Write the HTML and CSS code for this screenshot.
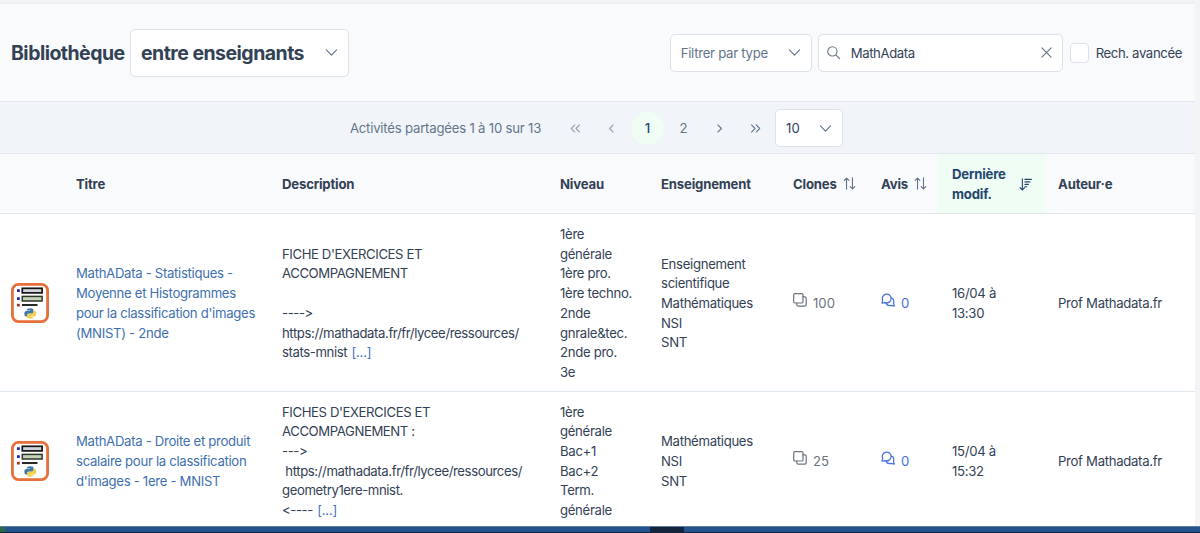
FILE: index.html
```
<!DOCTYPE html>
<html lang="fr">
<head>
    <meta charset="UTF-8">
    <meta name="viewport" content="width=device-width, initial-scale=1.0">
    <title>Bibliothèque entre enseignants</title>
    <link rel="stylesheet" href="styles.css">
</head>
<body>
    <!-- Shared icons -->
    <svg class="defs" width="0" height="0">
        <symbol id="chevron" viewBox="0 0 14 14"><path d="M1.5 4.2 7 9.8l5.5-5.6"/></symbol>
        <symbol id="sort" viewBox="0 0 14 14"><path d="M3.8 13V1.2M1.3 3.7l2.5-2.5 2.5 2.5M10.2 1v11.8M7.7 10.3l2.5 2.5 2.5-2.5"/></symbol>
        <symbol id="clone" viewBox="0 0 14 14"><rect x=".7" y=".7" width="9.3" height="9.3" rx="1.3"/><path d="M10 3.8h1.8a1.4 1.4 0 0 1 1.4 1.4v6.6a1.4 1.4 0 0 1-1.4 1.4H5.2a1.4 1.4 0 0 1-1.4-1.4V10"/></symbol>
        <symbol id="comments" viewBox="0 0 14 14"><path d="M1 10.2l.7-3A4.4 4.4 0 1 1 4.3 9.6zM10.3 4.8a4 4 0 0 1 2.2 5l.8 3.3-3.5-.7a4.2 4.2 0 0 1-5-2.6"/></symbol>
        <symbol id="activity" viewBox="0 0 38 40">
            <rect x="1.4" y="1.4" width="35.2" height="37.2" rx="6" fill="#fff" stroke="#e66f3a" stroke-width="2.8"/>
            <path fill="#2222c8" d="M6 6.2h2.8V9H6zM6 14.2h2.8V17H6z"/>
            <path fill="#a93222" d="M6 20.8h2.8v2.7H6z"/>
            <rect x="11.3" y="5.3" width="19.8" height="4.6" fill="#d0d3dc" stroke="#141414" stroke-width="1.7"/>
            <rect x="11.3" y="13.4" width="19.8" height="4.6" fill="#c4d4b4" stroke="#2c352c" stroke-width="1.5"/>
            <path d="M11 22h15.5" stroke="#111" stroke-width="1.8"/>
            <path fill="#3f79a8" d="M15.8 26.8q0-1.6 3.4-1.6t3.3 1.7v2.3q0 1.5-1.6 1.5h-3.2q-1.7 0-1.7 1.8v.9h-1.1q-1.6 0-1.6-2.7t1.8-2.6h4v-.6h-3.3z"/>
            <path fill="#f3cf4e" d="M22.6 34q0 1.7-3.3 1.7T16 34v-2q0-1.5 1.6-1.5h3.2q1.8 0 1.8-1.8v-.9h1.2q1.5 0 1.5 2.7t-1.7 2.7h-4.2v.5h3.2z"/>
        </symbol>
    </svg>

    <div class="page">
        <header class="toolbar">
            <h1>Bibliothèque</h1>
            <div class="select select-title">
                <span>entre enseignants</span>
                <svg class="icon"><use href="#chevron"/></svg>
            </div>
            <div class="filters">
                <div class="select select-type">
                    <span>Filtrer par type</span>
                    <svg class="icon"><use href="#chevron"/></svg>
                </div>
                <div class="search">
                    <svg class="icon" viewBox="0 0 14 14"><circle cx="5.8" cy="5.8" r="5"/><path d="m9.5 9.5 4 4"/></svg>
                    <span>MathAdata</span>
                    <svg class="icon icon-clear" viewBox="0 0 14 14"><path d="m2 2 10 10M12 2 2 12"/></svg>
                </div>
                <span class="checkbox"></span>
                <span class="checkbox-label">Rech. avancée</span>
            </div>
        </header>

        <nav class="paginator">
            <span class="report">Activités partagées 1 à 10 sur 13</span>
            <span class="page-btn disabled"><svg class="icon" viewBox="0 0 14 14"><path d="M6.3 3.2 2.5 7l3.8 3.8M11.3 3.2 7.5 7l3.8 3.8"/></svg></span>
            <span class="page-btn disabled"><svg class="icon" viewBox="0 0 14 14"><path d="M8.8 3.2 5 7l3.8 3.8"/></svg></span>
            <span class="page-btn active"><span>1</span></span>
            <span class="page-btn"><span>2</span></span>
            <span class="page-btn"><svg class="icon" viewBox="0 0 14 14"><path d="M5.2 3.2 9 7l-3.8 3.8"/></svg></span>
            <span class="page-btn"><svg class="icon" viewBox="0 0 14 14"><path d="M2.7 3.2 6.5 7l-3.8 3.8M7.7 3.2 11.5 7l-3.8 3.8"/></svg></span>
            <div class="select select-rows">
                <span>10</span>
                <svg class="icon"><use href="#chevron"/></svg>
            </div>
        </nav>

        <table class="activities">
            <colgroup>
                <col class="col-icon"><col class="col-title"><col class="col-desc"><col class="col-level"><col class="col-subject">
                <col class="col-clones"><col class="col-reviews"><col class="col-date"><col>
            </colgroup>
            <thead>
                <tr>
                    <th></th>
                    <th>Titre</th>
                    <th>Description</th>
                    <th>Niveau</th>
                    <th>Enseignement</th>
                    <th><div class="sortable">Clones <svg class="icon"><use href="#sort"/></svg></div></th>
                    <th><div class="sortable">Avis <svg class="icon"><use href="#sort"/></svg></div></th>
                    <th class="sorted"><div class="sortable"><span>Dernière modif.</span>
                        <svg class="icon" viewBox="0 0 14 14"><path d="M3.6 1v11.8M1.1 10.3l2.5 2.5 2.5-2.5M6.4 1.5h6.9M6.4 4.2h5.3M6.4 6.9h3.7M6.4 9.4h2"/></svg></div></th>
                    <th>Auteur·e</th>
                </tr>
            </thead>
            <tbody>
                <tr>
                    <td class="cell-icon"><svg class="activity"><use href="#activity"/></svg></td>
                    <td><a href="#">MathAData - Statistiques -<br>Moyenne et Histogrammes<br>pour la classification d'images<br>(MNIST) - 2nde</a></td>
                    <td class="desc">FICHE D'EXERCICES ET
ACCOMPAGNEMENT

----&gt;
https://mathadata.fr/fr/lycee/ressources/
stats-mnist <a href="#">[...]</a></td>
                    <td>1ère<br>générale<br>1ère pro.<br>1ère techno.<br>2nde<br>gnrale&amp;tec.<br>2nde pro.<br>3e</td>
                    <td>Enseignement<br>scientifique<br>Mathématiques<br>NSI<br>SNT</td>
                    <td><span class="count clones"><svg class="icon"><use href="#clone"/></svg> 100</span></td>
                    <td><a class="count" href="#"><svg class="icon"><use href="#comments"/></svg> 0</a></td>
                    <td>16/04 à<br>13:30</td>
                    <td>Prof Mathadata.fr</td>
                </tr>
                <tr>
                    <td class="cell-icon"><svg class="activity"><use href="#activity"/></svg></td>
                    <td><a href="#">MathAData - Droite et produit<br>scalaire pour la classification<br>d'images - 1ere - MNIST</a></td>
                    <td class="desc">FICHES D'EXERCICES ET
ACCOMPAGNEMENT :
---&gt;
 https://mathadata.fr/fr/lycee/ressources/
geometry1ere-mnist.
&lt;---- <a href="#">[...]</a></td>
                    <td>1ère<br>générale<br>Bac+1<br>Bac+2<br>Term.<br>générale</td>
                    <td>Mathématiques<br>NSI<br>SNT</td>
                    <td><span class="count clones"><svg class="icon"><use href="#clone"/></svg> 25</span></td>
                    <td><a class="count" href="#"><svg class="icon"><use href="#comments"/></svg> 0</a></td>
                    <td>15/04 à<br>15:32</td>
                    <td>Prof Mathadata.fr</td>
                </tr>
            </tbody>
        </table>
    </div>

    <footer class="bottom-bar">
        <span class="bar-start"></span>
        <span class="bar-mark"></span>
    </footer>
</body>
</html>
```

FILE: styles.css
```
/* General page styling */
* {
    box-sizing: border-box;
}

body {
    font-family: Inter, sans-serif;
    font-size: 13.15px;
    line-height: 19.7px;
    font-feature-settings: "calt" 0, "liga" 0;
    color: #334155;
    background-color: #f3f4f5;
    margin: 0;
    height: 533px;
    display: flex;
    flex-direction: column;
    overflow: hidden;
}

a {
    color: #4070b0;
    text-decoration: none;
}

.defs {
    display: block;
    flex: none;
}

.icon {
    width: 13px;
    height: 13px;
    flex: none;
    fill: none;
    stroke: currentColor;
    stroke-width: 1.2;
    stroke-linecap: round;
    stroke-linejoin: round;
}

.page {
    flex: 1;
    min-height: 0;
    margin: 2px 5px 0 0;
    border-top: 2px solid #eeeff1;
    background-color: #fff;
    overflow: hidden;
}

/* Toolbar */
.toolbar {
    display: flex;
    align-items: center;
    height: 98px;
    padding: 0 13px 0 11px;
    background-color: #f8fafc;
    border-bottom: 1px solid #e2e8f0;
}

.toolbar h1 {
    margin: 0 4px 0 0;
    padding-top: 2px;
    width: 115px;
    font-size: 19.5px;
    font-weight: 700;
    letter-spacing: -0.53px;
    white-space: nowrap;
}

.select,
.search {
    display: flex;
    align-items: center;
    height: 38px;
    padding: 0 10px;
    background-color: #fff;
    border: 1px solid #dde2ea;
    border-radius: 5px;
    white-space: nowrap;
}

.select {
    justify-content: space-between;
}

.select span,
.search span {
    padding-top: 2px;
}

.select .icon {
    color: #64748b;
}

.select-title {
    width: 219px;
    height: 48px;
    font-size: 19.5px;
    font-weight: 700;
    letter-spacing: -0.53px;
}

.filters {
    display: flex;
    align-items: center;
    margin-left: auto;
}

.select-type {
    width: 142px;
    color: #64748b;
    letter-spacing: -0.27px;
}

.search {
    width: 245px;
    margin: 0 7px 0 6px;
    padding: 0 9px 0 8px;
    letter-spacing: -0.37px;
}

.search .icon {
    color: #64748b;
    margin-right: 11px;
}

.search .icon-clear {
    margin: 0 0 0 auto;
}

.checkbox {
    width: 19px;
    height: 20px;
    background-color: #fff;
    border: 1px solid #dde2ea;
    border-radius: 4px;
}

.checkbox-label {
    margin-left: 7px;
    padding-top: 2px;
    letter-spacing: -0.37px;
}

/* Paginator */
.paginator {
    display: flex;
    align-items: center;
    justify-content: center;
    height: 52px;
    padding-top: 1px;
    gap: 3px;
    color: #64748b;
    background-color: #f1f5f9;
    border-bottom: 1px solid #e2e8f0;
}

.report {
    margin: 0 15px 0 -2px;
    padding-top: 1px;
    letter-spacing: -0.2px;
}

.page-btn {
    display: flex;
    align-items: center;
    justify-content: center;
    width: 33px;
    height: 33px;
    border-radius: 50%;
}

.page-btn span {
    padding-top: 2px;
}

.page-btn.disabled {
    opacity: 0.65;
}

.page-btn.active {
    color: #24466f;
    background-color: #effdf5;
    font-weight: 500;
}

.select-rows {
    width: 68px;
    color: #334155;
}

/* Activities table */
.activities {
    width: 1195px;
    table-layout: fixed;
    border-collapse: separate;
    border-spacing: 0;
}

.col-icon { width: 63px; }
.col-title { width: 206px; }
.col-desc { width: 278px; }
.col-level { width: 101px; }
.col-subject { width: 132px; }
.col-clones { width: 88px; }
.col-reviews { width: 70px; }
.col-date { width: 107px; }

.activities th,
.activities td {
    padding: 11px 0 8px 13px;
    text-align: left;
    vertical-align: middle;
    border-bottom: 1px solid #e2e8f0;
    white-space: nowrap;
}

.activities td {
    letter-spacing: -0.3px;
}

.activities th {
    height: 60px;
    font-weight: 700;
    letter-spacing: -0.18px;
    background-color: #f8fafc;
}

.activities th.sorted {
    color: #24466f;
    background-color: #effdf5;
    padding-left: 14px;
    white-space: normal;
}

.sortable {
    display: flex;
    align-items: center;
    gap: 6px;
}

.sortable .icon {
    color: #64748b;
    position: relative;
    top: -1px;
}

.sorted .sortable {
    gap: 4px;
}

.sorted .sortable span {
    width: 63px;
}

.sorted .icon {
    color: #24466f;
}

.activities .desc {
    white-space: pre;
    letter-spacing: -0.4px;
}

.activities .cell-icon {
    padding: 10px 0 9px 11px;
}

.activities td:nth-child(8) {
    padding-left: 14px;
}

.activity {
    display: block;
    width: 38px;
    height: 40px;
}

.count {
    display: flex;
    align-items: center;
    gap: 6px;
    letter-spacing: 0;
}

.count .icon {
    position: relative;
    top: -4px;
    width: 14px;
    height: 14px;
}

.clones {
    color: #6b7280;
}

a.count {
    color: #4371dc;
}

.desc a {
    margin-left: 1px;
    color: #4371c8;
    letter-spacing: -0.2px;
}

/* Bottom bar */
.bottom-bar {
    display: flex;
    flex: none;
    height: 7px;
    background-color: #22538c;
    border-top: 1px solid #5b7da0;
    border-bottom: 1px solid #14243c;
}

.bar-start {
    width: 5px;
    background-color: #2b6848;
}

.bar-mark {
    width: 34px;
    margin-left: 645px;
    background-color: #14243c;
}
```
